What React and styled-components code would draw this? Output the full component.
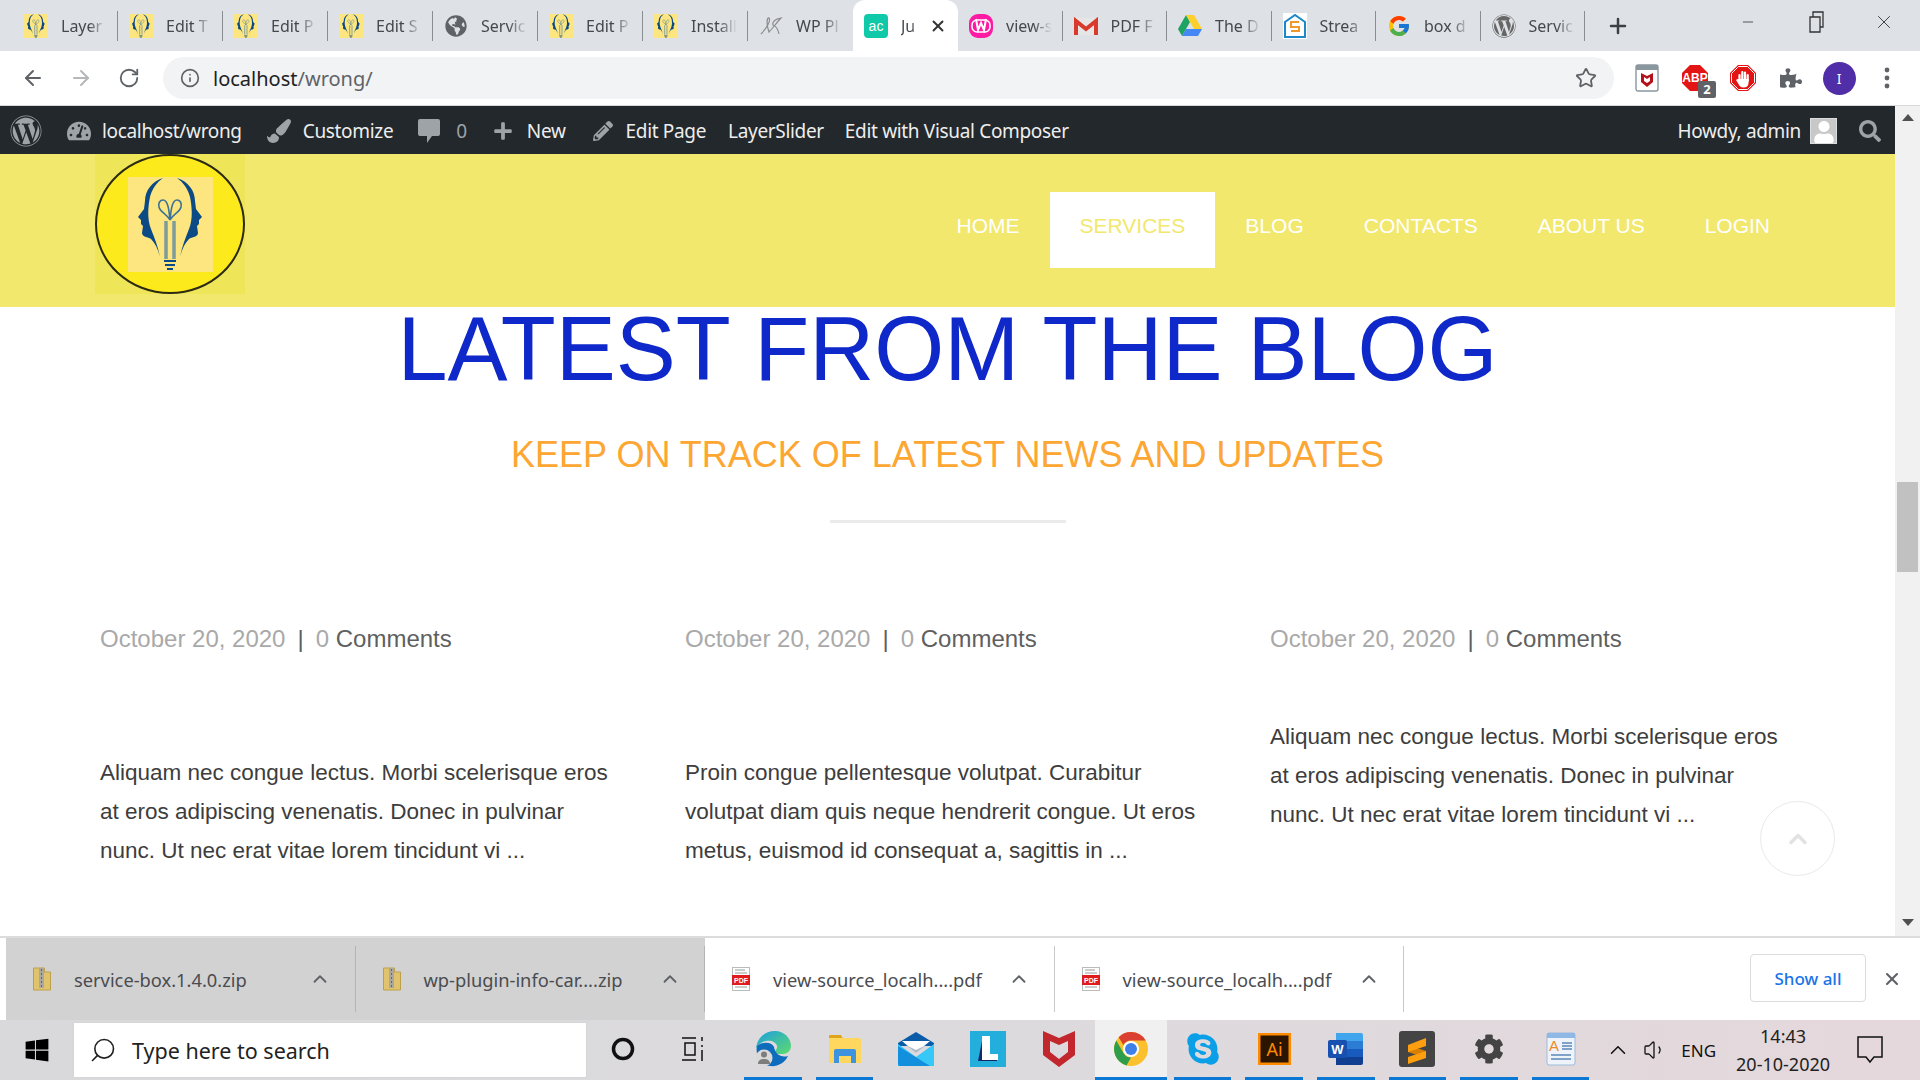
import React from 'react';
import styled, { createGlobalStyle } from 'styled-components';
import { ArrowLeft, ArrowRight, RotateCw, Info, Star, X, ChevronUp, Plus, Minus, Search, Volume1 } from 'lucide-react';
import { FaWordpress, FaTachometerAlt, FaPaintBrush, FaPlus, FaPencilAlt, FaSearch, FaPuzzlePiece, FaWindows, FaSkype, FaCog, FaGlobeAmericas, FaUser } from 'react-icons/fa';
import { FcGoogle } from 'react-icons/fc';

const GlobalStyle = createGlobalStyle`
  html, body { margin: 0; padding: 0; height: 100%; overflow: hidden; background: #fff; }
  * { box-sizing: border-box; }
`;

const uiFont = `"Noto Sans", "Open Sans", sans-serif`;
const siteFont = `"Liberation Sans", Arial, sans-serif`;

const Screen = styled.div`
  width: 1920px;
  height: 1080px;
  display: flex;
  flex-direction: column;
  overflow: hidden;
  font-family: ${uiFont};
`;

/* ---------- tabs ---------- */
const TabStrip = styled.div`
  height: 51px;
  flex: none;
  background: #dee1e6;
  display: flex;
  align-items: stretch;
  padding-left: 13px;
`;
const Tab = styled.div`
  width: ${p => (p.$narrow ? '104.5px' : '105px')};
  flex: none;
  height: 51px;
  display: flex;
  align-items: center;
  padding-left: 11px;
  position: relative;
  background: ${p => (p.$active ? '#fff' : 'transparent')};
  border-radius: ${p => (p.$active ? '12px 12px 0 0' : '0')};
  &::after {
    content: '';
    display: ${p => (p.$noSep ? 'none' : 'block')};
    position: absolute;
    right: 0;
    top: 11px;
    height: 30px;
    width: 1px;
    background: #8a8d91;
  }
`;
const TabIcon = styled.span`
  width: 24px;
  height: 24px;
  flex: none;
  display: flex;
  align-items: center;
  justify-content: center;
`;
const TabText = styled.span`
  margin-left: 13px;
  width: ${p => (p.$active ? '18px' : '46px')};
  overflow: hidden;
  white-space: nowrap;
  font-size: 16px;
  color: #45494e;
  -webkit-mask-image: linear-gradient(90deg, #000 60%, transparent 100%);
  mask-image: linear-gradient(90deg, #000 60%, transparent 100%);
`;
const TabClose = styled.span`
  margin-left: 10px;
  display: flex;
  color: #333;
`;
const NewTab = styled.span`
  margin-left: 21px;
  align-self: center;
  display: flex;
  color: #3c4043;
`;
const WindowButtons = styled.div`
  margin-left: auto;
  display: flex;
  align-items: flex-start;
  padding: 9px 2px 0 0;
  color: #333;
`;
const WindowButton = styled.span`
  width: 68px;
  height: 26px;
  display: flex;
  align-items: center;
  justify-content: center;
`;

/* ---------- toolbar ---------- */
const Toolbar = styled.div`
  height: 55px;
  flex: none;
  background: #fff;
  display: flex;
  align-items: center;
  border-bottom: 1px solid #d8d9db;
`;
const NavIcon = styled.span`
  width: 48px;
  height: 48px;
  flex: none;
  display: flex;
  align-items: center;
  justify-content: center;
  color: ${p => (p.$dim ? '#b5b7ba' : '#5f6368')};
`;
const NavGroup = styled.div`
  padding-left: 9px;
  display: flex;
  width: 163px;
`;
const Omnibox = styled.div`
  width: 1451px;
  height: 42px;
  flex: none;
  border-radius: 21px;
  background: #f1f3f4;
  display: flex;
  align-items: center;
  padding: 0 17px;
`;
const Url = styled.div`
  margin-left: 13px;
  font-size: 20px;
  color: #5f6368;
  b { font-weight: 400; color: #202124; }
`;
const Extensions = styled.div`
  display: flex;
  padding-left: 9px;
`;
const ExtSlot = styled.span`
  width: 48px;
  height: 48px;
  display: flex;
  align-items: center;
  justify-content: center;
  position: relative;
  color: #5f6368;
`;
const ExtBadge = styled.span`
  position: absolute;
  right: 3px;
  bottom: 4px;
  width: 18px;
  height: 17px;
  border-radius: 2px;
  background: #5f6368;
  color: #fff;
  font-size: 13px;
  font-weight: 700;
  line-height: 17px;
  text-align: center;
`;
const Avatar = styled.span`
  width: 33px;
  height: 33px;
  border-radius: 50%;
  background: #4f2ea8;
  color: #fff;
  font-size: 14px;
  display: flex;
  align-items: center;
  justify-content: center;
`;

/* ---------- page ---------- */
const Viewport = styled.div`
  flex: 1;
  min-height: 0;
  display: flex;
`;
const Page = styled.div`
  flex: 1;
  min-width: 0;
  display: flex;
  flex-direction: column;
  position: relative;
  overflow: hidden;
`;
const AdminBar = styled.div`
  height: 48px;
  flex: none;
  background: #23282d;
  display: flex;
  align-items: center;
  color: #eee;
  font-size: 19px;
  letter-spacing: -0.33px;
  padding: 2px 12px 0 10px;
`;
const AdminItem = styled.span`
  display: flex;
  align-items: center;
  gap: ${p => p.$gap || 12}px;
  margin-left: ${p => p.$ml || 0}px;
  white-space: nowrap;
  svg { color: #9ea3a8; flex: none; }
`;
const AdminCount = styled.span`
  color: #9ea3a8;
`;
const AdminRight = styled.div`
  margin-left: auto;
  display: flex;
  align-items: center;
  transform: translateX(-2px);
`;
const AdminAvatar = styled.span`
  width: 27px;
  height: 26px;
  margin-left: 9px;
  background: #c8c8c8;
  border: 1px solid #ddd;
  display: flex;
  align-items: flex-end;
  justify-content: center;
  overflow: hidden;
  svg { color: #fff; }
`;

const SiteHeader = styled.header`
  height: 153px;
  flex: none;
  background: #f2e86d;
  display: flex;
  align-items: flex-start;
  justify-content: space-between;
  padding: 0 95px;
`;
const Logo = styled.div`
  width: 150px;
  height: 140px;
  background: #efe559;
`;
const LogoDisc = styled.div`
  width: 150px;
  height: 140px;
  border-radius: 50%;
  background: #fdea1c;
  border: 2px solid #2b2a12;
  display: flex;
  align-items: center;
  justify-content: center;
`;
const Nav = styled.nav`
  display: flex;
  margin-top: 38px;
`;
const NavLink = styled.a`
  height: 76px;
  padding: 0 30px 8px;
  display: flex;
  align-items: center;
  font-family: ${siteFont};
  font-size: 21px;
  color: ${p => (p.$active ? '#f2e86d' : '#fff')};
  background: ${p => (p.$active ? '#fff' : 'transparent')};
`;

const Content = styled.main`
  flex: 1;
  min-height: 0;
  background: #fff;
  font-family: ${siteFont};
  text-align: center;
`;
const Title = styled.h1`
  margin: 0;
  font-size: 90px;
  line-height: 84px;
  font-weight: 400;
  color: #0f28c9;
`;
const Subtitle = styled.h2`
  margin: 43px 0 0;
  font-size: 36px;
  line-height: 42px;
  font-weight: 400;
  color: #fda632;
`;
const Divider = styled.div`
  width: 236px;
  height: 3px;
  margin: 44px auto 0;
  background: #ebebeb;
`;
const Posts = styled.div`
  display: grid;
  grid-template-columns: repeat(3, 585px);
  margin-top: 98px;
  padding-left: 100px;
  text-align: left;
`;
const Post = styled.article`
  display: flex;
  flex-direction: column;
`;
const Meta = styled.div`
  font-size: 24px;
  line-height: 36px;
  color: #a9a9a9;
  height: 36px;
  span { color: #5f5f5f; }
  i { font-style: normal; color: #5f5f5f; margin: 0 12px; }
`;
const Excerpt = styled.p`
  margin: ${p => (p.$raised ? '60px' : '96px')} 0 0;
  width: 515px;
  font-size: 22.5px;
  line-height: 39px;
  color: #3d3d3d;
`;
const BackToTop = styled.div`
  position: absolute;
  left: 1760px;
  top: 695px;
  width: 75px;
  height: 75px;
  border-radius: 50%;
  border: 1px solid #e9e9e9;
  display: flex;
  align-items: center;
  justify-content: center;
  color: #e2e2e2;
`;

const Scrollbar = styled.div`
  width: 25px;
  flex: none;
  background: #f1f1f1;
  display: flex;
  flex-direction: column;
  align-items: center;
  padding-top: 8px;
`;
const ScrollArrow = styled.span`
  width: 0;
  height: 0;
  border-left: 6px solid transparent;
  border-right: 6px solid transparent;
  ${p => (p.$down ? 'border-top: 7px solid #505050;' : 'border-bottom: 7px solid #505050;')}
`;
const ScrollThumb = styled.div`
  width: 21px;
  height: 90px;
  margin-top: 361px;
  margin-bottom: auto;
  background: #c1c1c1;
`;
const ScrollFoot = styled.div`
  height: 17px;
  display: flex;
  align-items: flex-start;
`;

/* ---------- downloads ---------- */
const DownloadBar = styled.div`
  height: 84px;
  flex: none;
  background: #fff;
  border-top: 2px solid #dcdcdc;
  display: flex;
  padding-left: 6px;
  position: relative;
`;
const DownloadItem = styled.div`
  width: 349.5px;
  flex: none;
  display: flex;
  align-items: center;
  padding-left: 27px;
  background: ${p => (p.$dim ? '#d2d2d2' : '#fff')};
  position: relative;
  &::after {
    content: '';
    position: absolute;
    right: 0;
    top: 8px;
    height: 66px;
    width: 1px;
    background: ${p => (p.$dim ? '#b4b4b4' : '#c9c9c9')};
  }
`;
const FileName = styled.span`
  margin-left: 23px;
  font-size: 18.3px;
  color: #4a4c50;
  width: 235px;
  white-space: nowrap;
`;
const ItemCaret = styled.span`
  display: flex;
  color: #5f6368;
`;
const ShowAll = styled.button`
  position: absolute;
  left: 1750px;
  top: 16px;
  width: 116px;
  height: 48px;
  border: 1px solid #dadce0;
  border-radius: 4px;
  background: #fff;
  color: #1a73e8;
  font-family: ${uiFont};
  font-size: 17px;
  font-weight: 500;
`;
const BarClose = styled.span`
  position: absolute;
  left: 1882px;
  top: 31px;
  display: flex;
  color: #5f6368;
`;

/* ---------- taskbar ---------- */
const Taskbar = styled.div`
  height: 60px;
  flex: none;
  background: linear-gradient(90deg, #d9d9dc 0%, #dcdadd 50%, #e5d8dc 100%);
  display: flex;
  align-items: stretch;
`;
const StartButton = styled.div`
  width: 73px;
  display: flex;
  align-items: center;
  justify-content: center;
  color: #000;
`;
const SearchBox = styled.div`
  width: 514px;
  height: 56px;
  margin-top: 2px;
  background: #fff;
  border: 1px solid #d6d6d6;
  display: flex;
  align-items: center;
  padding-left: 15px;
  gap: 15px;
  font-size: 21.5px;
  color: #222;
`;
const TaskTools = styled.div`
  display: flex;
  margin-right: 7px;
`;
const TaskSlot = styled.div`
  width: 71.6px;
  flex: none;
  display: flex;
  align-items: center;
  justify-content: center;
  padding-bottom: 3px;
  position: relative;
  background: ${p => (p.$focus ? '#f1f0f1' : 'transparent')};
  &::after {
    content: '';
    display: ${p => (p.$open ? 'block' : 'none')};
    position: absolute;
    left: ${p => (p.$focus ? '0' : '7px')};
    right: ${p => (p.$focus ? '0' : '7px')};
    bottom: 0;
    height: 3px;
    background: #0a78d4;
  }
`;
const Tray = styled.div`
  flex: 1;
  display: flex;
  align-items: center;
  color: #111;
`;
const TrayItem = styled.span`
  display: flex;
  align-items: center;
  margin-left: ${p => p.$ml}px;
  font-size: 17px;
`;
const Clock = styled.div`
  margin-left: 15px;
  width: 104px;
  text-align: center;
  font-size: 18px;
  line-height: 28px;
  color: #222;
  white-space: nowrap;
`;

/* ---------- drawn icons ---------- */
const BulbHalf = ({ flip }) => (
  <path
    fill="#0b4a85"
    transform={flip ? 'matrix(-1 0 0 1 84 0)' : undefined}
    d="M35 1C24 4 17 14 17 24l-1 8-6 8 3 3v4l2 2-1 7c0 4 6 4 9 6 4 4 7 10 9 18-2-10-5-18-9-28-4-10-3-22-1-32 2-8 7-15 13-19z"
  />
);
const BulbLogo = ({ width = 24, height = 24 }) => (
  <svg width={width} height={height} viewBox="0 0 85 95" preserveAspectRatio="none">
    <rect width="85" height="95" fill="#fde67f" />
    <BulbHalf />
    <BulbHalf flip />
    <path fill="none" stroke="#3d7396" strokeWidth="1.6" d="M42 43c-3-6-10-8-11-13-1-4 1-7 4-7 5 0 6 10 7 20zm0 0c3-6 10-8 11-13 1-4-1-7-4-7-5 0-6 10-7 20z" />
    <path fill="none" stroke="#7f9c9c" strokeWidth="3.5" d="M38 44v38M46 44v38" />
    <path fill="#0b4a85" d="M36 83h12v2H36zM37 87h10v2H37zM39 91h6v2h-6z" />
  </svg>
);
const Acorn = () => (
  <svg width="24" height="24"><rect width="24" height="24" rx="4" fill="#10c9a8" /><text x="12" y="17" fill="#fff" fontSize="14" fontFamily="Liberation Sans" textAnchor="middle">ac</text></svg>
);
const WampIcon = () => (
  <svg width="24" height="24" viewBox="0 0 24 24"><rect width="24" height="24" rx="9" fill="#ff1aa3" /><rect x="3" y="6" width="18" height="12" rx="5" fill="none" stroke="#fff" strokeWidth="1.6" /><path fill="none" stroke="#fff" strokeWidth="2" d="M7 5l2 11 3-7 3 7 2-11" /></svg>
);
const GmailIcon = () => (
  <svg width="24" height="18" viewBox="0 0 24 18"><rect y="1" width="24" height="17" fill="#e6e6e6" /><path fill="none" stroke="#d93a2b" strokeWidth="4" d="M2 18V4l10 8 10-8v14" /></svg>
);
const DriveIcon = () => (
  <svg width="24" height="22" viewBox="0 0 24 22"><path fill="#1ea362" d="M8 0L0 14l4 7 8-14z" /><path fill="#ffcf2b" d="M8 0h8l8 14h-8z" /><path fill="#4487f5" d="M4 21h16l4-7H8z" /></svg>
);
const StreamIcon = () => (
  <svg width="24" height="26" viewBox="0 0 24 26"><path fill="#fff" d="M0 0h24v26H0z" /><path fill="none" stroke="#1c87c9" strokeWidth="2" d="M2 24V9l10-7 10 7v15z" /><path fill="none" stroke="#f0992b" strokeWidth="2" d="M16 9H8v5h8v4H8" /></svg>
);
const ScribbleIcon = () => (
  <svg width="24" height="24" viewBox="0 0 24 24" fill="none" stroke="#8c8c8c" strokeWidth="1.2"><path d="M2 20C8 14 12 6 10 4 8 3 7 10 10 18c4-4 8-10 12-14-6 1-9 4-8 7 3 1 5 4 6 9" /></svg>
);
const McafeeTile = () => (
  <svg width="24" height="28" viewBox="0 0 24 28"><rect x="1" y="1" width="22" height="26" rx="2" fill="#fff" stroke="#8b979e" strokeWidth="1.4" /><rect x="1" y="1" width="22" height="5" fill="#8b979e" /><path fill="#b5121b" d="M6 9l6 3 6-3v9l-6 5-6-5zm3 4v4l3 2 3-2v-4l-3 2z" /></svg>
);
const Octagon = ({ children }) => (
  <svg width="26" height="26" viewBox="0 0 26 26"><path fill="#e31414" d="M8 0h10l8 8v10l-8 8H8l-8-8V8z" />{children}</svg>
);
const HandMark = () => (
  <g>
    <path fill="none" stroke="#fff" strokeWidth="1" d="M8.5 1.5h9l7 7v9l-7 7h-9l-7-7v-9z" />
    <path fill="none" stroke="#fff" strokeWidth="2.2" strokeLinecap="round" d="M9.5 10v5M12.3 7v7M15 7.5V14M17.7 10v6" />
    <path fill="#fff" d="M8.5 14h10v4c0 3-2 4.5-5 4.5-3 0-4-1.5-5-3.5l-2.5-4 1.5-1z" />
  </g>
);
const McafeeShield = () => (
  <svg width="32" height="36" viewBox="0 0 32 36"><path fill="#c1272d" d="M0 0l16 7 16-7v24l-16 12L0 24zM7 10v11l9 7 9-7V10l-9 4z" /></svg>
);
const ZipIcon = () => (
  <svg width="18" height="24" viewBox="0 0 18 24"><path fill="#e1c36e" stroke="#bfa04a" d="M.5 1h11v4h6v18H.5z" /><rect x="6" y="1" width="5" height="20" fill="#a8a8a0" /><path stroke="#666" strokeDasharray="2 2" d="M8.5 2v18" /></svg>
);
const PdfIcon = () => (
  <svg width="18" height="24" viewBox="0 0 18 24"><rect x=".5" y=".5" width="17" height="23" fill="#fff" stroke="#bbb" /><path stroke="#999" d="M3 3h10M3 6h12M3 20h12" /><rect y="8" width="18" height="10" fill="#e01b1b" /><text x="9" y="16" fill="#fff" fontSize="7" fontWeight="700" fontFamily="Liberation Sans" textAnchor="middle">PDF</text></svg>
);
const CommentIcon = () => (
  <svg width="22" height="26" viewBox="0 0 22 26" fill="currentColor"><path d="M2 1h18a2 2 0 0 1 2 2v13a2 2 0 0 1-2 2h-6l-5 7v-7H2a2 2 0 0 1-2-2V3a2 2 0 0 1 2-2z" /></svg>
);
const EdgeIcon = () => (
  <svg width="36" height="36" viewBox="0 0 36 36">
    <defs>
      <linearGradient id="edgeTop" x1="0" y1="0" x2="1" y2="1"><stop offset="0" stopColor="#1b9de2" /><stop offset="1" stopColor="#5fdc6c" /></linearGradient>
    </defs>
    <path fill="url(#edgeTop)" d="M1 18C2 7 10 0 20 0c9 0 16 7 16 15 0 5-4 8-8 8h-9c0-3 4-5 3-8-1-4-6-6-11-5C6 11 2 14 1 18z" />
    <path fill="#0f6cbd" d="M2 15c6-5 15-4 17 1 1 7 7 11 14 9-3 7-11 11-18 10C6 34 0 25 2 15z" />
    <circle cx="9" cy="27" r="8.5" fill="#d9d9d9" />
    <circle cx="9" cy="23.5" r="3" fill="#7d7d7d" />
    <path fill="#7d7d7d" d="M3 33c0-4 3-5 6-5s6 1 6 5z" />
  </svg>
);
const FolderIcon = () => (
  <svg width="32" height="28" viewBox="0 0 32 28"><path fill="#e0a41c" d="M0 1a1 1 0 0 1 1-1h11l2 4H0z" /><path fill="#ffd75e" d="M0 3h30a2 2 0 0 1 2 2v23H0z" /><path fill="#3d93dd" d="M5 28V16a2 2 0 0 1 2-2h18a2 2 0 0 1 2 2v12h-5v-7H10v7z" /></svg>
);
const MailIcon = () => (
  <svg width="36" height="34" viewBox="0 0 36 34"><path fill="#0a5ca8" d="M18 0l18 11v3H0v-3z" /><path fill="#fff" d="M4 9h28L18 21z" /><path fill="#aeb8c4" d="M8 13l10 8 10-8-10 5z" /><path fill="#38c8f8" d="M0 12l18 13 18-13v22H0z" /><path fill="#1390dd" d="M0 14l32 20H2a2 2 0 0 1-2-2z" /></svg>
);
const LTile = () => (
  <svg width="36" height="36" viewBox="0 0 36 36"><rect width="36" height="36" fill="#24aedb" /><path fill="#10286e" d="M12 10L8 30h19v-1H12z" /><path fill="#fff" d="M12 5h8v18h8v6H12z" /></svg>
);
const ChromeIcon = () => (
  <svg width="34" height="34" viewBox="0 0 34 34"><circle cx="17" cy="17" r="17" fill="#fbc02d" /><path fill="#db3f32" d="M17 0a17 17 0 0 1 14.7 8.5H17A8.5 8.5 0 0 0 9.4 13L4.6 5.3A17 17 0 0 1 17 0z" /><path fill="#2f9e4a" d="M2.3 8.5 9.6 21.3A8.5 8.5 0 0 0 17 25.5L12.5 33.4A17 17 0 0 1 2.3 8.5z" /><circle cx="17" cy="17" r="8" fill="#fff" /><circle cx="17" cy="17" r="6" fill="#3f7fe8" /></svg>
);
const AiIcon = () => (
  <svg width="33" height="32" viewBox="0 0 33 32"><rect width="33" height="32" fill="#ff8a00" /><rect x="2.5" y="2.5" width="28" height="27" fill="#2b1400" /><text x="16.5" y="23" fill="#ff8a00" fontSize="18" fontFamily="Noto Sans" textAnchor="middle">Ai</text></svg>
);
const WordIcon = () => (
  <svg width="35" height="32" viewBox="0 0 35 32"><path fill="#41a5ee" d="M8 0h25a2 2 0 0 1 2 2v6H8z" /><path fill="#2b7cd3" d="M8 8h27v8H8z" /><path fill="#185abd" d="M8 16h27v8H8z" /><path fill="#103f91" d="M8 24h27v6a2 2 0 0 1-2 2H8z" /><rect y="7" width="19" height="18" rx="2" fill="#1850b0" /><text x="9.5" y="21" fill="#fff" fontSize="13" fontWeight="700" fontFamily="Liberation Sans" textAnchor="middle">W</text></svg>
);
const SublimeIcon = () => (
  <svg width="36" height="36" viewBox="0 0 36 36"><rect width="36" height="36" rx="3" fill="#444" /><path fill="#d97f00" d="M9 14l18 6v7L9 21z" /><path fill="#ff9f10" d="M9 14l18-7v8L9 21zM9 26l18-6v7L9 33z" /></svg>
);
const NotesIcon = () => (
  <svg width="30" height="34" viewBox="0 0 30 34"><rect x="1" y="1" width="28" height="32" rx="2" fill="#eef3fa" stroke="#9dbbdb" /><rect x="1" y="1" width="28" height="5" fill="#8fb8e4" /><text x="8" y="19" fill="#f08a24" fontSize="15" fontFamily="Liberation Sans" textAnchor="middle">A</text><path stroke="#5e88b8" strokeWidth="1.5" d="M16 11h10M16 14h10M16 17h10M5 23h20M5 27h20" /></svg>
);
const SpeechBubble = () => (
  <svg width="26" height="28" viewBox="0 0 26 28" fill="none" stroke="#111" strokeWidth="1.5"><path d="M1 1h24v20h-8l-4 5-4-5H1z" /></svg>
);
const TaskView = () => (
  <svg width="24" height="26" viewBox="0 0 24 26" fill="none" stroke="#111" strokeWidth="1.5"><path d="M0 2h14M0 24h14M3 7h10v12H3zM20 1v4M20 9v2M20 14v11" /></svg>
);
const CortanaRing = () => (
  <svg width="24" height="24" viewBox="0 0 24 24" fill="none" stroke="#111" strokeWidth="3.5"><circle cx="12" cy="12" r="9.5" /></svg>
);
const RestoreIcon = () => (
  <svg width="15" height="22" viewBox="0 0 15 22" fill="none" stroke="#333" strokeWidth="1.3"><path d="M1 6h10v15H1zM4 6V1h10v15h-3" /></svg>
);
const KebabIcon = () => (
  <svg width="6" height="22" viewBox="0 0 6 22" fill="#5f6368"><circle cx="3" cy="3" r="2.4" /><circle cx="3" cy="11" r="2.4" /><circle cx="3" cy="19" r="2.4" /></svg>
);

const bulb = <BulbLogo />;
const tabs = [
  { icon: bulb, text: 'Layer' },
  { icon: bulb, text: 'Edit T' },
  { icon: bulb, text: 'Edit P' },
  { icon: bulb, text: 'Edit S' },
  { icon: <FaGlobeAmericas size={22} color="#5f6368" />, text: 'Servic' },
  { icon: bulb, text: 'Edit P' },
  { icon: bulb, text: 'Install' },
  { icon: <ScribbleIcon />, text: 'WP Pl' },
  { icon: <Acorn />, text: 'Ju', active: true },
  { icon: <WampIcon />, text: 'view-s', narrow: true },
  { icon: <GmailIcon />, text: 'PDF F', narrow: true },
  { icon: <DriveIcon />, text: 'The D', narrow: true },
  { icon: <StreamIcon />, text: 'Strea', narrow: true },
  { icon: <FcGoogle size={24} />, text: 'box d', narrow: true },
  { icon: <FaWordpress size={24} color="#666" />, text: 'Servic', narrow: true },
];

const navLinks = ['HOME', 'SERVICES', 'BLOG', 'CONTACTS', 'ABOUT US', 'LOGIN'];

const lorem = 'Aliquam nec congue lectus. Morbi scelerisque eros at eros adipiscing venenatis. Donec in pulvinar nunc. Ut nec erat vitae lorem tincidunt vi ...';
const posts = [
  { text: lorem },
  { text: 'Proin congue pellentesque volutpat. Curabitur volutpat diam quis neque hendrerit congue. Ut eros metus, euismod id consequat a, sagittis in ...' },
  { text: lorem, raised: true },
];

const downloads = [
  { name: 'service-box.1.4.0.zip', icon: <ZipIcon />, dim: true },
  { name: 'wp-plugin-info-car....zip', icon: <ZipIcon />, dim: true },
  { name: 'view-source_localh....pdf', icon: <PdfIcon /> },
  { name: 'view-source_localh....pdf', icon: <PdfIcon /> },
];

const taskApps = [
  { icon: <EdgeIcon />, open: true },
  { icon: <FolderIcon />, open: true },
  { icon: <MailIcon /> },
  { icon: <LTile /> },
  { icon: <McafeeShield /> },
  { icon: <ChromeIcon />, open: true, focus: true },
  { icon: <FaSkype size={36} color="#0a9fe6" />, open: true },
  { icon: <AiIcon />, open: true },
  { icon: <WordIcon />, open: true },
  { icon: <SublimeIcon />, open: true },
  { icon: <FaCog size={30} color="#444" />, open: true },
  { icon: <NotesIcon />, open: true },
];

const App = () => {
  return (
    <Screen>
      <GlobalStyle />
      <TabStrip>
        {tabs.map((t, i) => (
          <Tab key={i} $active={t.active} $narrow={t.narrow} $noSep={t.active || tabs[i + 1]?.active}>
            <TabIcon>{t.icon}</TabIcon>
            <TabText $active={t.active}>{t.text}</TabText>
            {t.active && <TabClose><X size={18} strokeWidth={2.5} /></TabClose>}
          </Tab>
        ))}
        <NewTab><Plus size={24} strokeWidth={2.5} /></NewTab>
        <WindowButtons>
          <WindowButton><Minus size={16} strokeWidth={1.2} /></WindowButton>
          <WindowButton><RestoreIcon /></WindowButton>
          <WindowButton><X size={22} strokeWidth={1} /></WindowButton>
        </WindowButtons>
      </TabStrip>

      <Toolbar>
        <NavGroup>
          <NavIcon><ArrowLeft size={24} /></NavIcon>
          <NavIcon $dim><ArrowRight size={24} /></NavIcon>
          <NavIcon><RotateCw size={22} /></NavIcon>
        </NavGroup>
        <Omnibox>
          <Info size={20} color="#5f6368" />
          <Url><b>localhost</b>/wrong/</Url>
          <Star size={22} color="#5f6368" style={{ marginLeft: 'auto' }} />
        </Omnibox>
        <Extensions>
          <ExtSlot><McafeeTile /></ExtSlot>
          <ExtSlot>
            <Octagon><text x="13" y="17" fill="#fff" fontSize="12" fontWeight="700" fontFamily="Liberation Sans" textAnchor="middle">ABP</text></Octagon>
            <ExtBadge>2</ExtBadge>
          </ExtSlot>
          <ExtSlot><Octagon><HandMark /></Octagon></ExtSlot>
          <ExtSlot><FaPuzzlePiece size={22} /></ExtSlot>
          <ExtSlot><Avatar>I</Avatar></ExtSlot>
          <ExtSlot><KebabIcon /></ExtSlot>
        </Extensions>
      </Toolbar>

      <Viewport>
        <Page>
          <AdminBar>
            <AdminItem><FaWordpress size={32} /></AdminItem>
            <AdminItem $ml={25} $gap={11}><FaTachometerAlt size={24} />localhost/wrong</AdminItem>
            <AdminItem $ml={25} $gap={12}><FaPaintBrush size={24} />Customize</AdminItem>
            <AdminItem $ml={25} $gap={16}><CommentIcon /><AdminCount>0</AdminCount></AdminItem>
            <AdminItem $ml={26} $gap={14}><FaPlus size={20} />New</AdminItem>
            <AdminItem $ml={27} $gap={13}><FaPencilAlt size={20} />Edit Page</AdminItem>
            <AdminItem $ml={22}>LayerSlider</AdminItem>
            <AdminItem $ml={21}>Edit with Visual Composer</AdminItem>
            <AdminRight>
              <AdminItem>Howdy, admin</AdminItem>
              <AdminAvatar><FaUser size={22} /></AdminAvatar>
              <AdminItem $ml={22}><FaSearch size={22} /></AdminItem>
            </AdminRight>
          </AdminBar>

          <SiteHeader>
            <Logo>
              <LogoDisc>
                <BulbLogo width={85} height={95} />
              </LogoDisc>
            </Logo>
            <Nav>
              {navLinks.map((l, i) => (
                <NavLink key={l} $active={i === 1}>{l}</NavLink>
              ))}
            </Nav>
          </SiteHeader>

          <Content>
            <Title>LATEST FROM THE BLOG</Title>
            <Subtitle>KEEP ON TRACK OF LATEST NEWS AND UPDATES</Subtitle>
            <Divider />
            <Posts>
              {posts.map((p, i) => (
                <Post key={i}>
                  <Meta>October 20, 2020<i>|</i>0 <span>Comments</span></Meta>
                  <Excerpt $raised={p.raised}>{p.text}</Excerpt>
                </Post>
              ))}
            </Posts>
          </Content>
          <BackToTop><ChevronUp size={28} strokeWidth={3} /></BackToTop>
        </Page>
        <Scrollbar>
          <ScrollArrow />
          <ScrollThumb />
          <ScrollFoot><ScrollArrow $down /></ScrollFoot>
        </Scrollbar>
      </Viewport>

      <DownloadBar>
        {downloads.map((d, i) => (
          <DownloadItem key={i} $dim={d.dim}>
            {d.icon}
            <FileName>{d.name}</FileName>
            <ItemCaret><ChevronUp size={22} /></ItemCaret>
          </DownloadItem>
        ))}
        <ShowAll>Show all</ShowAll>
        <BarClose><X size={20} strokeWidth={2.5} /></BarClose>
      </DownloadBar>

      <Taskbar>
        <StartButton><FaWindows size={26} /></StartButton>
        <SearchBox>
          <Search size={28} strokeWidth={1.4} style={{ transform: 'scaleX(-1)' }} />
          Type here to search
        </SearchBox>
        <TaskTools>
          <TaskSlot><CortanaRing /></TaskSlot>
          <TaskSlot><TaskView /></TaskSlot>
        </TaskTools>
        {taskApps.map((a, i) => (
          <TaskSlot key={i} $open={a.open} $focus={a.focus}>{a.icon}</TaskSlot>
        ))}
        <Tray>
          <TrayItem $ml={9}><ChevronUp size={26} strokeWidth={1.4} /></TrayItem>
          <TrayItem $ml={12}><Volume1 size={24} strokeWidth={1.3} /></TrayItem>
          <TrayItem $ml={14}>ENG</TrayItem>
          <Clock>14:43<br />20-10-2020</Clock>
          <TrayItem $ml={22}><SpeechBubble /></TrayItem>
        </Tray>
      </Taskbar>
    </Screen>
  );
};

export default App;
